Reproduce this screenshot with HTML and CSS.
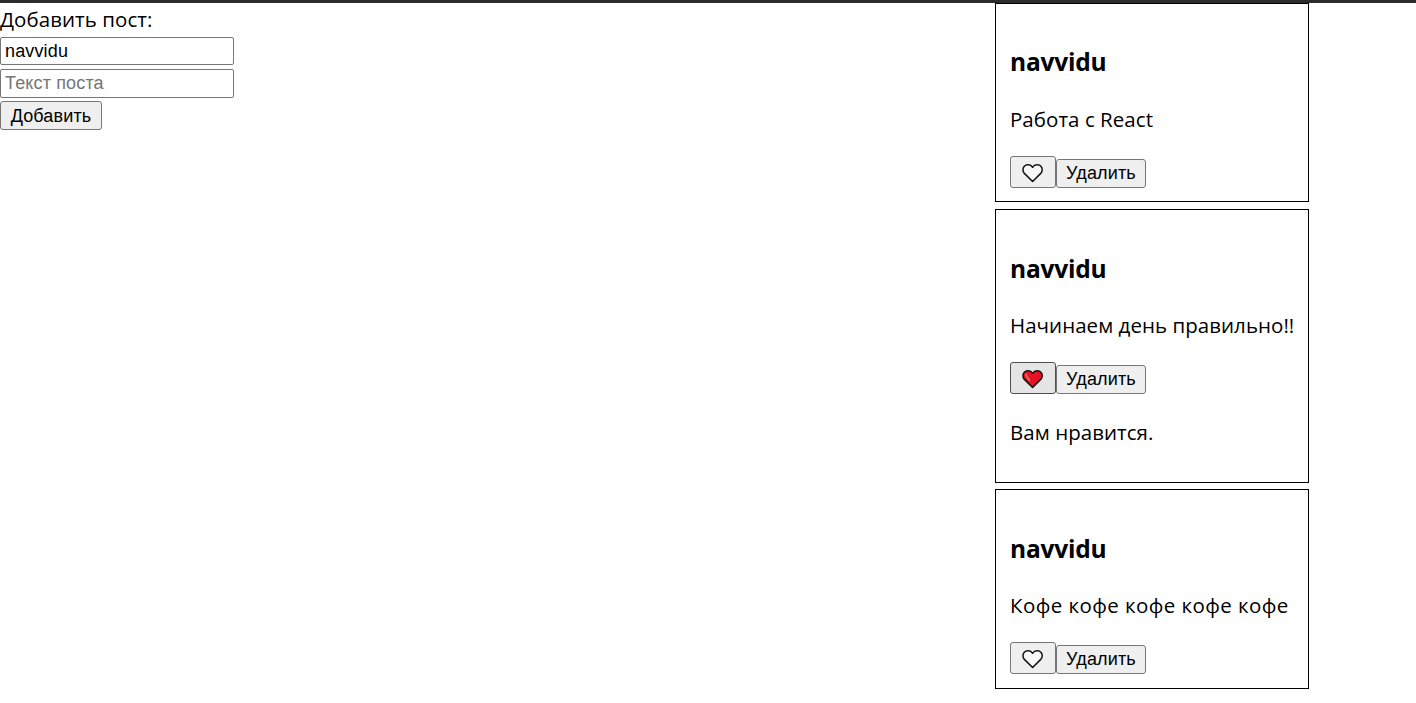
FILE: index.html
```
<!DOCTYPE html>
<html lang="ru">
<head>
<meta charset="utf-8">
<title>Посты</title>
<link rel="stylesheet" href="styles.css">
</head>
<body>
<svg class="symbols" width="0" height="0">
  <symbol id="heart" viewBox="0 0 22 20">
    <path d="M10.600 18.500 2.100 10.100C.6 8.400.6 5.200 2.100 3.500 4.200 1.100 8.500 1.200 10.600 4.300 12.700 1.200 17 1.100 19.100 3.500 20.600 5.200 20.600 8.400 19 10.100Z" stroke="#111" stroke-width="1.5" stroke-linejoin="round"/>
  </symbol>
</svg>
<main class="page">
  <form class="form">
    <label class="form-title" for="author">Добавить пост:</label>
    <input class="field field-author" id="author" type="text" value="navvidu">
    <input class="field field-text" type="text" placeholder="Текст поста">
    <button class="btn btn-add" type="button">Добавить</button>
  </form>
  <section class="posts">
    <article class="post">
      <h3 class="post-author">navvidu</h3>
      <p class="post-text">Работа с React</p>
      <div class="actions">
        <button class="btn like" type="button" aria-label="Нравится"><svg class="heart"><use href="#heart"/></svg></button>
        <button class="btn remove" type="button">Удалить</button>
      </div>
    </article>
    <article class="post post-liked">
      <h3 class="post-author">navvidu</h3>
      <p class="post-text">Начинаем день правильно!!</p>
      <div class="actions">
        <button class="btn like like-on" type="button" aria-label="Нравится"><svg class="heart heart-on" viewBox="0 0 22 20"><use href="#heart" width="22" height="20"/><path class="shine" d="M4 5.500Q4.300 8 7.500 11"/></svg></button>
        <button class="btn remove" type="button">Удалить</button>
      </div>
      <p class="post-text post-note">Вам нравится.</p>
    </article>
    <article class="post post-last">
      <h3 class="post-author">navvidu</h3>
      <p class="post-text post-text-wide">Кофе кофе кофе кофе кофе</p>
      <div class="actions">
        <button class="btn like" type="button" aria-label="Нравится"><svg class="heart"><use href="#heart"/></svg></button>
        <button class="btn remove" type="button">Удалить</button>
      </div>
    </article>
  </section>
</main>
</body>
</html>
```
FILE: styles.css
```
* { box-sizing: border-box; }
body {
  margin: 0;
  background: #fff;
  color: #000;
  font-family: "Open Sans", "Noto Sans", sans-serif;
  font-size: 20.5px;
  line-height: 28px;
}
.symbols { display: block; }
.page {
  display: flex;
  justify-content: space-between;
  align-items: flex-start;
  height: 703px;
  padding-right: 107px;
  border-top: 3px solid #2d2b2c;
}
.form {
  display: flex;
  flex-direction: column;
  align-items: flex-start;
  padding-top: 2px;
}
.form-title { display: block; height: 32px; letter-spacing: 0.05px; }
.field, .btn {
  margin: 0;
  border: 1px solid #767676;
  border-radius: 3px;
  color: #000;
  font-family: "Liberation Sans", Arial, sans-serif;
  font-size: 18px;
  line-height: 22px;
  letter-spacing: 0.15px;
}
.field { width: 234px; padding: 0 4px; border-radius: 2px; background: #fff; }
.field::placeholder { color: #757575; opacity: 1; }
.field-author { height: 28px; margin-bottom: 4px; }
.field-text { height: 29px; margin-bottom: 3px; }
.btn { padding: 0; background: #efefef; white-space: nowrap; text-align: center; }
.btn-add { width: 102px; height: 29px; }
.posts { width: 314px; }
.post {
  height: 199px;
  margin-bottom: 7px;
  padding: 42px 0 0 14px;
  border: 1px solid #000;
}
.post-liked { height: 274px; margin-bottom: 6px; }
.post-last { height: 200px; margin-bottom: 0; }
.post-author {
  margin: 0 0 27px;
  font-size: 24.5px;
  font-weight: 700;
  line-height: 32px;
  letter-spacing: -0.2px;
}
.post-liked .post-author, .post-last .post-author { margin: 1px 0 26px; }
.post-text { margin: 0 0 23px; white-space: nowrap; letter-spacing: 0.04px; }
.post-text-wide { letter-spacing: 0.42px; }
.actions { display: flex; align-items: flex-end; height: 32px; }
.like { display: flex; align-items: center; justify-content: center; width: 46px; height: 32px; padding: 1px 1px 0 0; }
.like-on { background: #e5e5e5; border-color: #4f4f4f; }
.remove { width: 90px; height: 29px; padding-bottom: 2px; }
.heart { width: 22px; height: 20px; fill: #f7f7f7; }
.heart-on { fill: #e81224; }
.shine { fill: none; stroke: #f26c5c; stroke-width: 1.8; stroke-linecap: round; }
.post-note { margin: 24px 0 0; }
```
